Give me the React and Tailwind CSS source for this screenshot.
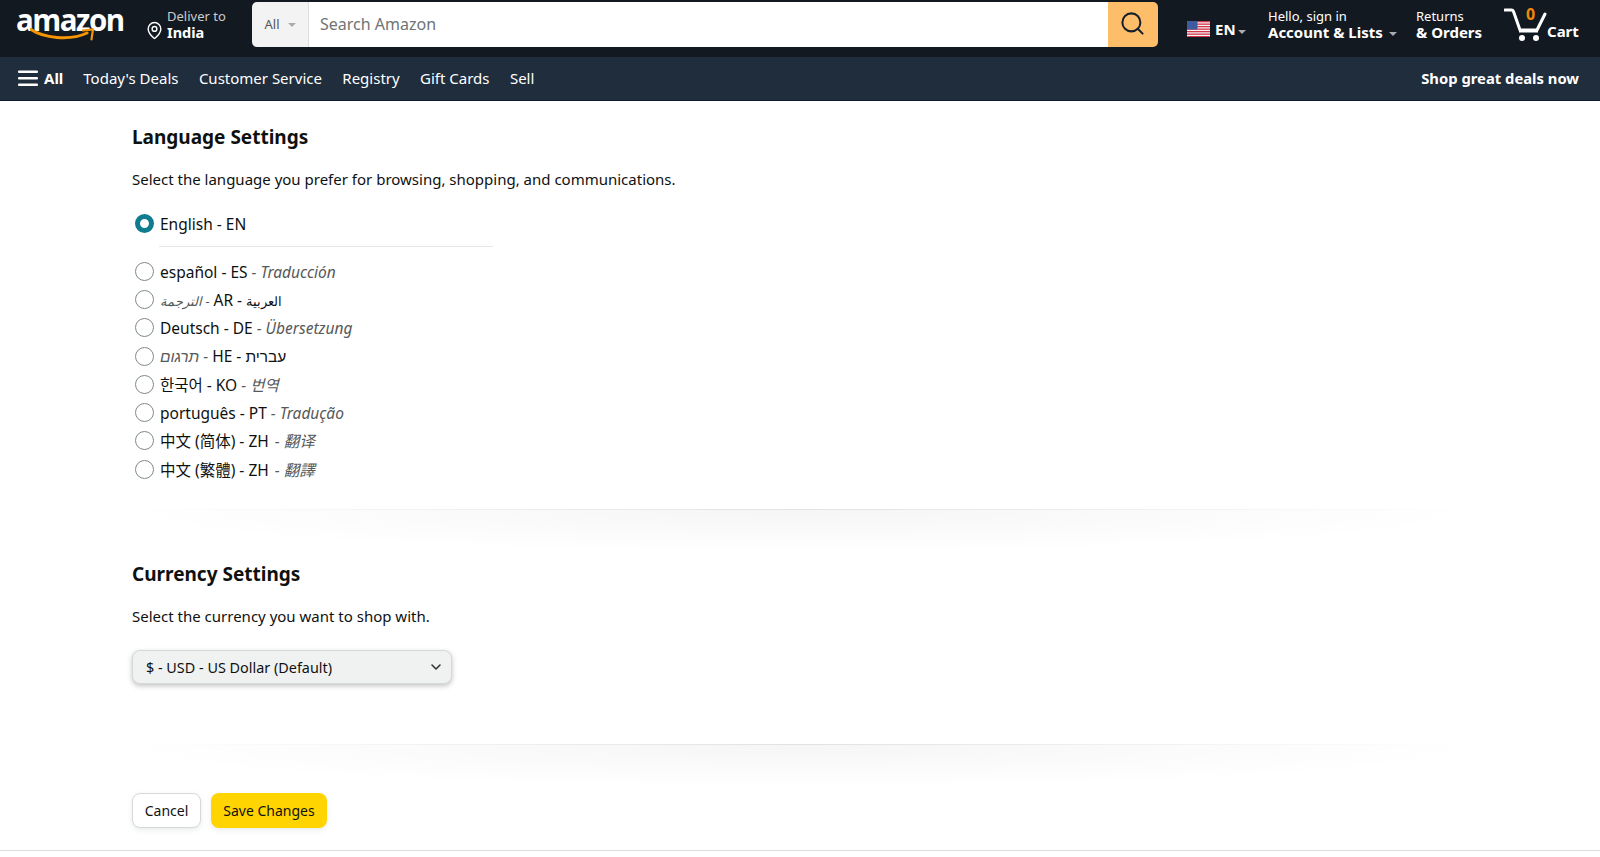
import React from "react";
import { MapPin, Search, ChevronDown } from "lucide-react";

const font = "[font-family:'Noto_Sans','Noto_Sans_CJK_KR',sans-serif]";

function Caret({ className = "" }) {
  return <span className={`inline-block w-0 h-0 border-x-[4px] border-x-transparent border-t-[4px] border-t-[#a7acb2] ${className}`} />;
}

function Flag() {
  return (
    <svg width="23" height="16" viewBox="0 0 23 16" className="rounded-[1px]">
      <rect width="23" height="16" fill="#f4f4f4" />
      {[0, 2.5, 5, 7.5, 10, 12.5, 15].map((y) => (
        <rect key={y} y={y} width="23" height="1.3" fill="#d4344a" />
      ))}
      <rect width="10.5" height="8.5" fill="#3f5a9e" />
    </svg>
  );
}

function Cart() {
  return (
    <svg width="44" height="34" viewBox="0 0 44 34" fill="none">
      <path d="M1 3h6.5c1 0 1.6.5 2 1.5L16 23h17l8-16" stroke="#fff" strokeWidth="3" strokeLinecap="round" strokeLinejoin="round" />
      <circle cx="18" cy="31" r="3" fill="#fff" />
      <circle cx="32" cy="31" r="3" fill="#fff" />
      <rect x="15" y="22.5" width="19" height="3" fill="#fff" />
    </svg>
  );
}

function Logo() {
  return (
    <div className="relative w-[114px] h-[46px] shrink-0">
      <span className="block [font-family:'Open_Sans',sans-serif] font-bold text-[29.5px] leading-[40px] -mt-[3px] tracking-[-1.5px] text-white">amazon</span>
      <svg className="absolute left-[14px] top-[28px]" width="70" height="16" viewBox="0 0 70 16" fill="none">
        <path d="M1 1.5C13 9.5 39 13.5 57 5" stroke="#f79400" strokeWidth="3" strokeLinecap="round" />
        <path d="M53 2.5l10-1.2-1.5 10" stroke="#f79400" strokeWidth="2.2" strokeLinecap="round" strokeLinejoin="round" />
      </svg>
    </div>
  );
}

function Radio({ checked }) {
  return checked ? (
    <span className="shrink-0 w-[19px] h-[19px] rounded-full border-[5.5px] border-[#0f7c90] bg-white" />
  ) : (
    <span className="shrink-0 w-[19px] h-[19px] rounded-full border border-[#7e8a8c] bg-white" />
  );
}

function Option({ children }) {
  return (
    <div className="h-[28.3px] flex items-center gap-[6px] pl-[3px] text-[15.5px] text-[#0f1111]">
      <Radio />
      <span className="relative top-[1px]">{children}</span>
    </div>
  );
}

function T({ children, className = "" }) {
  return <i className={`text-[#565959] ${className}`}>- {children}</i>;
}

function FadeDivider({ className = "" }) {
  return (
    <div className={`h-[44px] [background:linear-gradient(to_right,rgba(0,0,0,0),rgba(0,0,0,0.08)_50%,rgba(0,0,0,0))_top/100%_1px_no-repeat,radial-gradient(ellipse_52%_100%_at_50%_0%,rgba(0,0,0,0.04),rgba(0,0,0,0)_100%)] ${className}`} />
  );
}

export default function App() {
  return (
    <div className={`w-[1600px] h-[857px] overflow-hidden bg-white ${font}`}>
      <header className="h-[57px] pb-[8px] bg-[#131921] flex items-center text-white">
        <div className="ml-[16px] mr-[15px]"><Logo /></div>
        <div className="flex items-center gap-[3px] w-[107px] shrink-0">
          <MapPin size={19} strokeWidth={1.8} className="mt-[12px]" />
          <div>
            <div className="text-[13px] leading-[15px] text-[#ccc]">Deliver to</div>
            <div className="text-[14.5px] leading-[16px] font-bold">India</div>
          </div>
        </div>
        <div className="flex w-[906px] h-[45px] rounded-[5px] overflow-hidden shrink-0">
          <div className="w-[57px] bg-[#f3f3f3] text-[#555] text-[13px] flex items-center justify-center gap-[8px] border-r border-[#ddd]">
            All <Caret />
          </div>
          <div className="flex-1 bg-white flex items-center pl-[11px] pb-[2px] text-[#6f7373] text-[16px]">Search Amazon</div>
          <div className="w-[50px] bg-[#febd69] flex items-center justify-center text-[#16202c]">
            <Search size={27} strokeWidth={1.8} className="-ml-[2px] -mt-[2px]" />
          </div>
        </div>
        <div className="ml-[29px] mt-[9px] flex items-center gap-[5px] w-[81px] shrink-0">
          <Flag />
          <span className="text-[15px] font-bold">EN</span>
          <Caret className="mt-[6px] -ml-[3px]" />
        </div>
        <div className="w-[148px] shrink-0">
          <div className="text-[13px] leading-[15px]">Hello, sign in</div>
          <div className="text-[15px] leading-[16px] font-bold flex items-center gap-[6px] whitespace-nowrap">Account &amp; Lists <Caret className="mt-[3px]" /></div>
        </div>
        <div className="w-[88px] shrink-0">
          <div className="text-[13px] leading-[15px]">Returns</div>
          <div className="text-[15px] leading-[16px] font-bold whitespace-nowrap">&amp; Orders</div>
        </div>
        <div className="relative flex items-end shrink-0 h-[36px] w-[80px] pb-[2px]">
          <Cart />
          <span className="absolute left-[22px] -top-[3px] text-[#f08804] font-bold text-[16px] leading-[20px]">0</span>
          <span className="text-[15px] font-bold leading-[17px] mb-[1px] -ml-[1px]">Cart</span>
        </div>
      </header>
      <nav className="h-[44px] bg-[#1f2d3d] border-b border-[#101a3a] flex items-center text-white text-[15px] pl-[18px] pr-[21px]">
        <svg width="20" height="17" viewBox="0 0 20 17" className="mr-[5px]">
          <rect width="20" height="2.4" y="0.5" rx="1" fill="#fff" />
          <rect width="20" height="2.4" y="7" rx="1" fill="#fff" />
          <rect width="20" height="2.4" y="13.5" rx="1" fill="#fff" />
        </svg>
        <span className="font-bold ml-[1px] mr-[20px]">All</span>
        <div className="flex gap-[20.4px]">
          <span>Today's Deals</span>
          <span>Customer Service</span>
          <span>Registry</span>
          <span>Gift Cards</span>
          <span>Sell</span>
        </div>
        <span className="ml-auto font-bold text-[14.8px]">Shop great deals now</span>
      </nav>
      <main className="px-[132px] text-[#0f1111]">
        <h2 className="text-[19px] leading-[24px] font-bold mt-[24px]">Language Settings</h2>
        <p className="text-[15px] leading-[20px] mt-[20px]">Select the language you prefer for browsing, shopping, and communications.</p>
        <div className="mt-[20px] h-[28px] flex items-center gap-[6px] pl-[3px] text-[15.5px]">
          <Radio checked />
          <span className="relative top-[2px]">English - EN</span>
        </div>
        <div className="ml-[27px] w-[334px] border-t border-[#e7e7e7] mt-[9px] mb-[10px]" />
        <Option>español - ES <T>Traducción</T></Option>
        <Option><span dir="rtl" className="inline-block"><span className="text-[13px]">العربية</span> - AR <T className="text-[13px]">الترجمة</T></span></Option>
        <Option>Deutsch - DE <T>Übersetzung</T></Option>
        <Option><span dir="rtl" className="inline-block">עברית - HE <T>תרגום</T></span></Option>
        <Option>한국어 - KO <T>번역</T></Option>
        <Option>português - PT <T>Tradução</T></Option>
        <Option>中文 (简体) - ZH <T className="ml-[2px]">翻译</T></Option>
        <Option>中文 (繁體) - ZH <T className="ml-[2px]">翻譯</T></Option>
        <FadeDivider className="mt-[26px]" />
        <h2 className="text-[19px] leading-[24px] font-bold mt-[9px]">Currency Settings</h2>
        <p className="text-[15px] leading-[20px] mt-[20px]">Select the currency you want to shop with.</p>
        <div className="mt-[24px] w-[320px] h-[34px] rounded-[8px] bg-[#f0f2f2] border border-[#d5d9d9] shadow-[0_2px_5px_rgba(15,17,17,0.25)] flex items-center justify-between pl-[13px] pr-[7px] text-[14.4px]">
          <span>$ - USD - US Dollar (Default)</span>
          <ChevronDown size={16} strokeWidth={2.4} className="text-[#333]" />
        </div>
        <FadeDivider className="mt-[60px]" />
        <div className="flex gap-[10px] mt-[5px] text-[14px]">
          <div className="w-[69px] h-[35px] rounded-[8px] bg-white border border-[#d5d9d9] shadow-[0_2px_5px_rgba(213,217,217,0.5)] flex items-center justify-center">Cancel</div>
          <div className="w-[116px] h-[35px] rounded-[8px] bg-[#ffd400] shadow-[0_2px_5px_rgba(213,217,217,0.5)] flex items-center justify-center">Save Changes</div>
        </div>
      </main>
      <div className="border-t border-[#dcdcdc] mt-[22px]" />
    </div>
  );
}
